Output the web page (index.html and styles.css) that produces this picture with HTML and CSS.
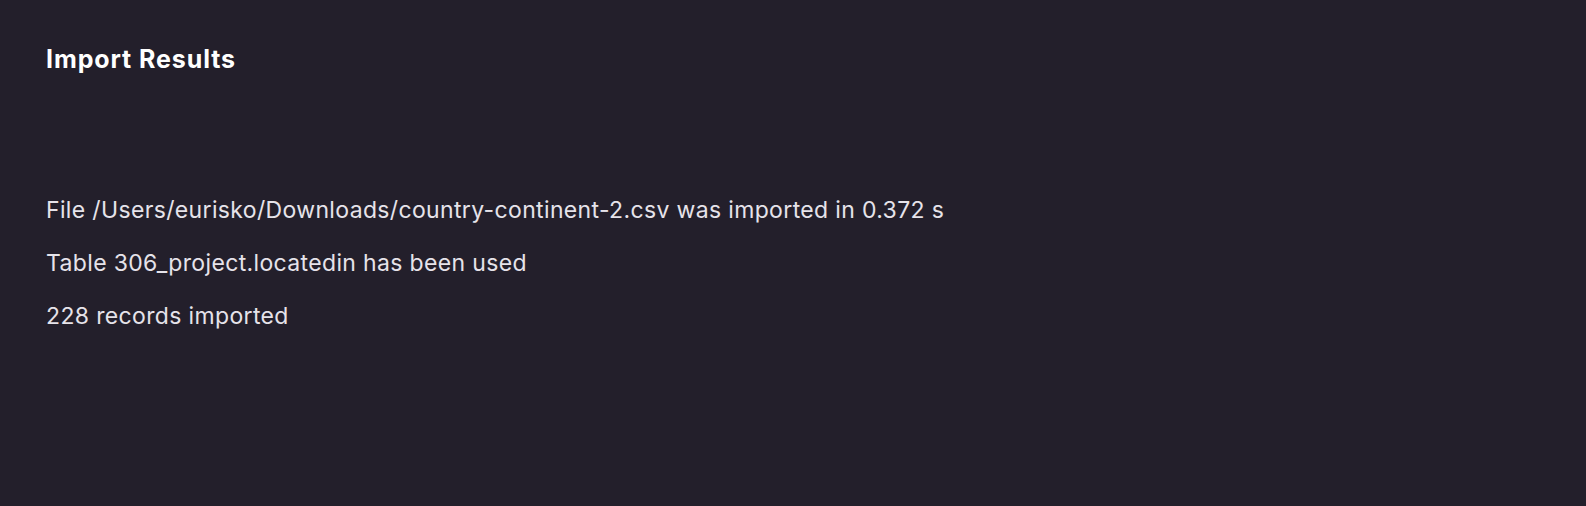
FILE: index.html
```html
<!DOCTYPE html>
<html>
<head>
<meta charset="utf-8">
<link rel="stylesheet" href="styles.css">
</head>
<body>
<main class="panel">
  <h1 class="title">Import Results</h1>
  <div class="results">
    <p class="line">File /Users/eurisko/Downloads/country-continent-2.csv was imported in 0.372 s</p>
    <p class="line">Table 306_project.locatedin has been used</p>
    <p class="line">228 records imported</p>
  </div>
</main>
</body>
</html>
```
FILE: styles.css
```css
html, body {
  margin: 0;
  padding: 0;
  background: #231f2b;
  width: 1586px;
  height: 506px;
  overflow: hidden;
}
.panel {
  padding: 44px 46px;
  font-family: Inter, "Noto Sans", sans-serif;
  color: #e6e3ea;
}
.title {
  margin: 0;
  font-size: 25px;
  font-weight: 700;
  letter-spacing: 0.9px;
  color: #ffffff;
  line-height: 30px;
}
.results {
  margin-top: 123px;
  display: flex;
  flex-direction: column;
  gap: 26px;
}
.line {
  margin: 0;
  font-size: 23px;
  letter-spacing: 0.35px;
  line-height: 27px;
}
```
